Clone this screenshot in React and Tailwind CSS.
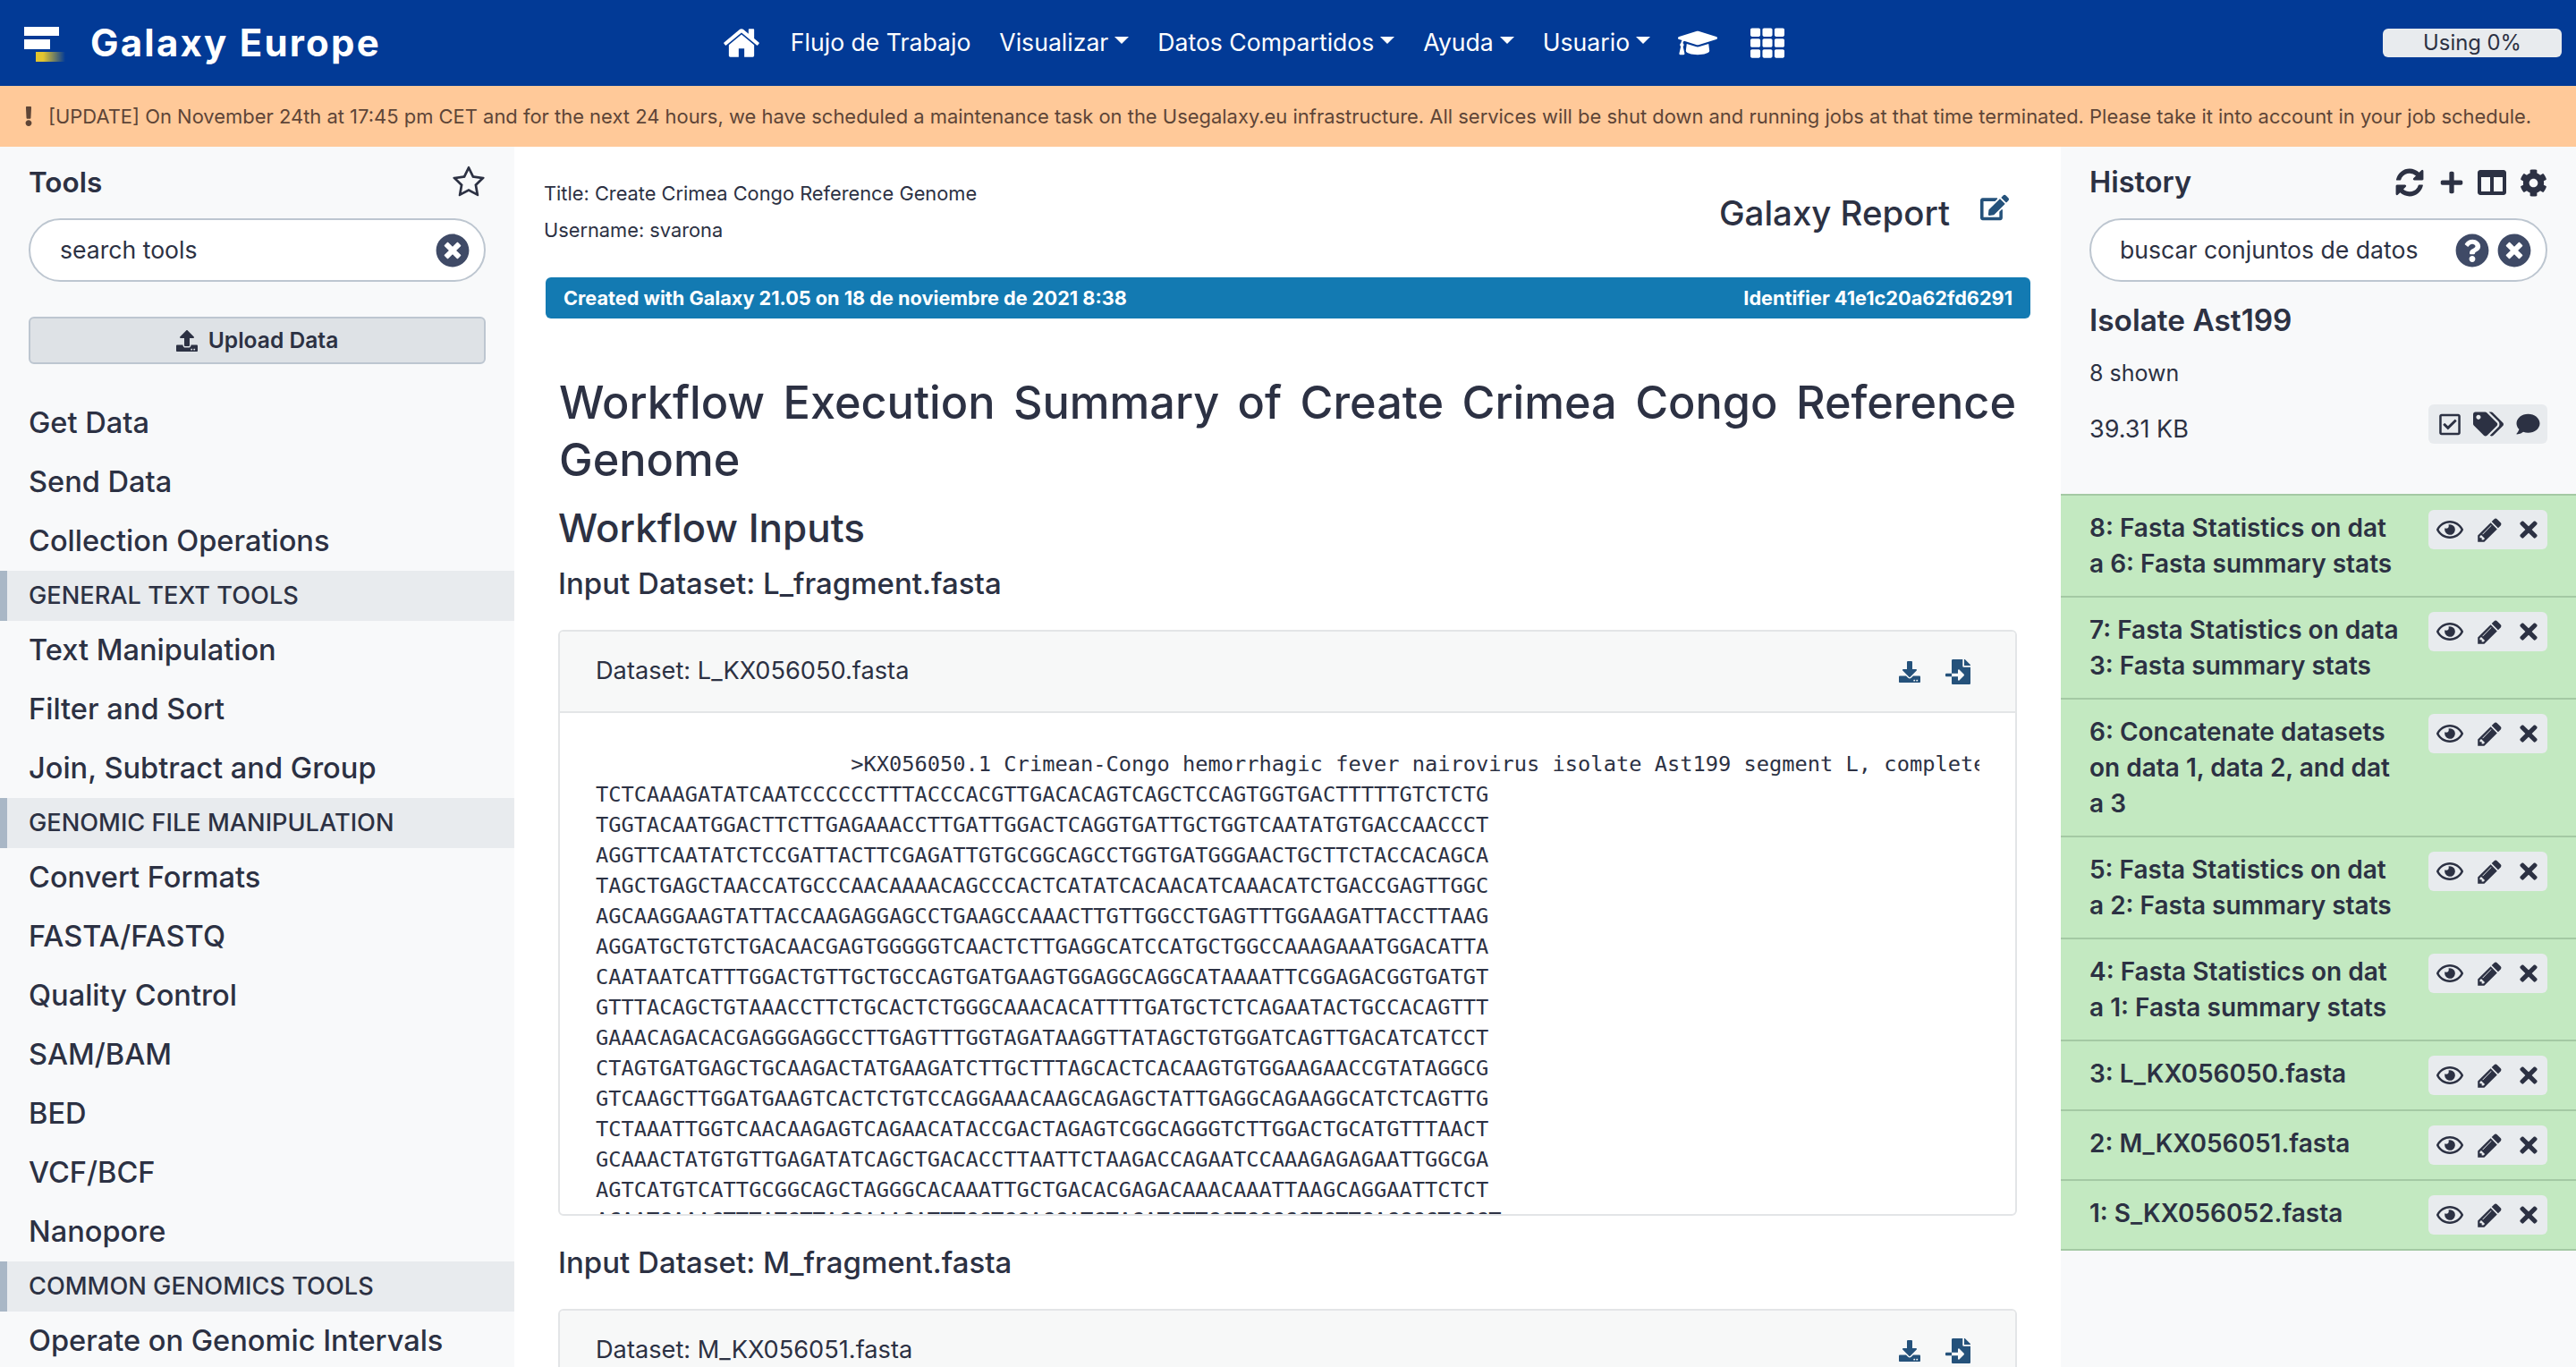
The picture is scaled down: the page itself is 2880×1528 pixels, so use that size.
import * as React from "react";
import {
  FaTimesCircle,
  FaUpload,
  FaEdit,
  FaPlus,
  FaColumns,
  FaCog,
  FaQuestionCircle,
  FaRegCheckSquare,
  FaTags,
  FaComment,
  FaRegEye,
  FaTimes,
  FaDownload,
  FaFileImport,
  FaExclamation,
  FaGraduationCap,
  FaTh,
} from "react-icons/fa";

const Fa4 = ({ d, className }) => (
  <svg viewBox="0 0 1792 1792" fill="currentColor" className={className}>
    <path d={d} />
  </svg>
);

const HOME =
  "M1472 992v480q0 26-19 45t-45 19h-384v-384h-256v384h-384q-26 0-45-19t-19-45v-480q0-1 .5-3t.5-3l575-474 575 474q1 2 1 6zm223-69l-62 74q-8 9-21 11h-3q-13 0-21-7l-692-577-692 577q-12 8-24 7-13-2-21-11l-62-74q-8-10-7-23.5t11-21.5l719-599q32-26 76-26t76 26l244 204v-195q0-14 9-23t23-9h192q14 0 23 9t9 23v408l219 182q10 8 11 21.5t-7 23.5z";
const REFRESH =
  "M1639 1056q0 5-1 7-64 268-268 434.5t-478 166.5q-146 0-282.5-55t-243.5-157l-129 129q-19 19-45 19t-45-19-19-45v-448q0-26 19-45t45-19h448q26 0 45 19t19 45-19 45l-137 137q71 66 161 102t187 36q134 0 250-65t186-179q11-17 53-117 8-23 30-23h192q13 0 22.5 9.5t9.5 22.5zm25-800v448q0 26-19 45t-45 19h-448q-26 0-45-19t-19-45 19-45l138-138q-148-137-349-137-134 0-250 65t-186 179q-11 17-53 117-8 23-30 23h-199q-13 0-22.5-9.5t-9.5-22.5v-7q65-268 270-434.5t480-166.5q146 0 284 55.5t245 156.5l130-129q19-19 45-19t45 19 19 45z";
const PENCIL =
  "M491 1536l91-91-235-235-91 91v107h128v128h107zm523-928q0-22-22-22-10 0-17 7l-542 542q-7 7-7 17 0 22 22 22 10 0 17-7zm-54-192l416 416-832 832h-416v-416zm683 96q0 53-37 91l-166 166-416-416 166-165q36-38 91-38 53 0 91 38l235 234q37 39 37 91z";
const STAR =
  "M1201 1004l306-297-422-62-189-382-189 382-422 62 306 297-73 421 378-199 377 199zm527-357q0 22-26 48l-363 354 86 500q1 7 1 20 0 50-41 50-19 0-40-12l-449-236-449 236q-22 12-40 12-21 0-31.5-14.5t-10.5-35.5q0-6 2-20l86-500-364-354q-25-27-25-48 0-37 56-46l502-73 225-455q19-41 49-41t49 41l225 455 502 73q56 9 56 46z";

const SEQ = [
  "TCTCAAAGATATCAATCCCCCCTTTACCCACGTTGACACAGTCAGCTCCAGTGGTGACTTTTTGTCTCTG",
  "TGGTACAATGGACTTCTTGAGAAACCTTGATTGGACTCAGGTGATTGCTGGTCAATATGTGACCAACCCT",
  "AGGTTCAATATCTCCGATTACTTCGAGATTGTGCGGCAGCCTGGTGATGGGAACTGCTTCTACCACAGCA",
  "TAGCTGAGCTAACCATGCCCAACAAAACAGCCCACTCATATCACAACATCAAACATCTGACCGAGTTGGC",
  "AGCAAGGAAGTATTACCAAGAGGAGCCTGAAGCCAAACTTGTTGGCCTGAGTTTGGAAGATTACCTTAAG",
  "AGGATGCTGTCTGACAACGAGTGGGGGTCAACTCTTGAGGCATCCATGCTGGCCAAAGAAATGGACATTA",
  "CAATAATCATTTGGACTGTTGCTGCCAGTGATGAAGTGGAGGCAGGCATAAAATTCGGAGACGGTGATGT",
  "GTTTACAGCTGTAAACCTTCTGCACTCTGGGCAAACACATTTTGATGCTCTCAGAATACTGCCACAGTTT",
  "GAAACAGACACGAGGGAGGCCTTGAGTTTGGTAGATAAGGTTATAGCTGTGGATCAGTTGACATCATCCT",
  "CTAGTGATGAGCTGCAAGACTATGAAGATCTTGCTTTAGCACTCACAAGTGTGGAAGAACCGTATAGGCG",
  "GTCAAGCTTGGATGAAGTCACTCTGTCCAGGAAACAAGCAGAGCTATTGAGGCAGAAGGCATCTCAGTTG",
  "TCTAAATTGGTCAACAAGAGTCAGAACATACCGACTAGAGTCGGCAGGGTCTTGGACTGCATGTTTAACT",
  "GCAAACTATGTGTTGAGATATCAGCTGACACCTTAATTCTAAGACCAGAATCCAAAGAGAGAATTGGCGA",
  "AGTCATGTCATTGCGGCAGCTAGGGCACAAATTGCTGACACGAGACAAACAAATTAAGCAGGAATTCTCT",
  "ACAATGAAACTTTATGTTACGAAAGATTTGCTGGAGGATGTAGATGTTGCTGGGCCTGTTGAGGGCTGGGT",
];

const HISTORY = [
  ["8: Fasta Statistics on dat", "a 6: Fasta summary stats"],
  ["7: Fasta Statistics on data", "3: Fasta summary stats"],
  ["6: Concatenate datasets", "on data 1, data 2, and dat", "a 3"],
  ["5: Fasta Statistics on dat", "a 2: Fasta summary stats"],
  ["4: Fasta Statistics on dat", "a 1: Fasta summary stats"],
  ["3: L_KX056050.fasta"],
  ["2: M_KX056051.fasta"],
  ["1: S_KX056052.fasta"],
];

function NavItem({ label, caret, className }) {
  return (
    <div className={"flex items-center whitespace-nowrap " + className}>
      <span>{label}</span>
      {caret && (
        <span className="ml-[7px] mb-[6px] h-0 w-0 border-x-[8px] border-t-[8px] border-x-transparent border-t-white" />
      )}
    </div>
  );
}

function Section({ children }) {
  return (
    <div className="flex h-[56px] items-center border-l-[8px] border-[#a9b7c6] bg-[#e8ebee] pl-[24px] text-[27.2px] font-medium uppercase">
      {children}
    </div>
  );
}

function Tool({ children }) {
  return <div className="flex h-[66px] items-center pb-[1px] pl-[32px] text-[32.6px] font-[450]">{children}</div>;
}

function Dataset({ name, children }) {
  return (
    <div className="mx-[49px] overflow-hidden rounded-[6px] border-2 border-[#e3e5e7]">
      <div className="flex h-[91px] items-center justify-between border-b-2 border-[#e3e5e7] bg-[#f7f8f8] pl-[40px] pr-[50px] text-[27.2px]">
        <span>Dataset: {name}</span>
        <div className="flex items-center gap-[28px] text-[#25527b]">
          <FaDownload className="h-[24px] w-[24px]" />
          <FaFileImport className="h-[28px] w-[28px]" />
        </div>
      </div>
      {children}
    </div>
  );
}

export default function App() {
  return (
    <div className="flex h-[1528px] flex-col overflow-hidden bg-white font-[Inter,sans-serif] text-[#2c3143]">
      <div className="flex h-[96px] shrink-0 items-center bg-[#023a96] text-white">
        <svg viewBox="0 0 48 42" className="ml-[27px] h-[42px] w-[48px] shrink-0">
          <defs>
            <linearGradient id="logoFade">
              <stop offset="0.25" stopColor="#e2c52f" />
              <stop offset="1" stopColor="#e2c52f" stopOpacity="0" />
            </linearGradient>
          </defs>
          <rect x="0" y="3" width="39" height="10" fill="#fff" />
          <rect x="0" y="17" width="29" height="11" fill="#fff" />
          <rect x="13" y="31" width="33" height="11" fill="url(#logoFade)" />
        </svg>
        <div className="mb-[2px] ml-[26px] whitespace-nowrap text-[42px] font-bold tracking-[2.2px]">Galaxy Europe</div>
        <Fa4 d={HOME} className="ml-[381px] h-[44px] w-[44px] shrink-0" />
        <div className="ml-[33px] flex items-center text-[26.6px]">
          <NavItem label="Flujo de Trabajo" />
          <NavItem label="Visualizar" caret className="ml-[32px]" />
          <NavItem label="Datos Compartidos" caret className="ml-[32px]" />
          <NavItem label="Ayuda" caret className="ml-[32px]" />
          <NavItem label="Usuario" caret className="ml-[32px]" />
        </div>
        <FaGraduationCap className="ml-[31px] h-[44px] w-[44px] shrink-0" />
        <FaTh className="ml-[37px] h-[38px] w-[38px] shrink-0" />
        <div className="ml-auto mr-[16px] flex h-[32px] w-[200px] items-center justify-center rounded-[6px] bg-[#e8ebee] text-[23.8px] text-[#2c3143]">
          Using 0%
        </div>
      </div>

      <div className="flex h-[68px] shrink-0 items-center whitespace-nowrap bg-[#ffc999] pl-[26px] text-[21.95px] text-[#5e4537]">
        <FaExclamation className="mr-[16px] h-[22px] w-[12px] shrink-0" />
        <span>
          [UPDATE] On November 24th at 17:45 pm CET and for the next 24 hours, we have scheduled a maintenance task on the
          Usegalaxy.eu infrastructure. All services will be shut down and running jobs at that time terminated. Please take
          it into account in your job schedule.
        </span>
      </div>

      <div className="flex min-h-0 flex-1">
        <div className="w-[575px] shrink-0 overflow-hidden bg-[#f8f9fa]">
          <div className="flex h-[80px] items-center justify-between px-[32px]">
            <span className="text-[31.5px] font-semibold">Tools</span>
            <Fa4 d={STAR} className="h-[38px] w-[38px]" />
          </div>
          <div className="mx-[32px] flex h-[71px] items-center justify-between rounded-full border-2 border-[#bdc6d0] bg-white pl-[33px] pr-[16px]">
            <span className="text-[26.6px]">search tools</span>
            <FaTimesCircle className="h-[38px] w-[38px] text-[#3f4a66]" />
          </div>
          <div className="mx-[32px] mt-[39px] flex h-[53px] items-center justify-center gap-[12px] rounded-[6px] border-2 border-[#bdc6d0] bg-[#dee2e6] text-[24.6px] font-semibold">
            <FaUpload className="h-[24px] w-[24px]" />
            Upload Data
          </div>
          <div className="mt-[33px]">
            <Tool>Get Data</Tool>
            <Tool>Send Data</Tool>
            <Tool>Collection Operations</Tool>
            <Section>General Text Tools</Section>
            <Tool>Text Manipulation</Tool>
            <Tool>Filter and Sort</Tool>
            <Tool>Join, Subtract and Group</Tool>
            <Section>Genomic File Manipulation</Section>
            <Tool>Convert Formats</Tool>
            <Tool>FASTA/FASTQ</Tool>
            <Tool>Quality Control</Tool>
            <Tool>SAM/BAM</Tool>
            <Tool>BED</Tool>
            <Tool>VCF/BCF</Tool>
            <Tool>Nanopore</Tool>
            <Section>Common Genomics Tools</Section>
            <Tool>Operate on Genomic Intervals</Tool>
          </div>
        </div>

        <div className="min-w-0 flex-1 overflow-hidden">
          <div className="flex h-[146px] justify-between pl-[33px] pr-[58px]">
            <div className="pt-[32px] text-[21.8px] leading-[41px]">
              <div>Title: Create Crimea Congo Reference Genome</div>
              <div>Username: svarona</div>
            </div>
            <div className="flex items-start pt-[46px]">
              <span className="text-[38.4px] font-medium leading-[56px]">Galaxy Report</span>
              <FaEdit className="ml-[34px] mt-[6px] h-[32px] w-[32px] text-[#25527b]" />
            </div>
          </div>
          <div className="ml-[35px] mr-[34px] flex h-[46px] items-center justify-between rounded-[6px] bg-[#137ab2] px-[20px] text-[21.7px] font-bold text-white">
            <span>Created with Galaxy 21.05 on 18 de noviembre de 2021 8:38</span>
            <span>Identifier 41e1c20a62fd6291</span>
          </div>
          <h1 className="mx-[50px] mt-[62px] text-justify text-[50.4px] font-medium leading-[64px]">
            Workflow Execution Summary of Create Crimea Congo Reference Genome
          </h1>
          <h2 className="mx-[49px] mt-[15px] text-[44px] font-medium leading-[58px]">Workflow Inputs</h2>
          <h3 className="mx-[49px] mt-[9px] text-[33px] font-medium leading-[48px]">Input Dataset: L_fragment.fasta</h3>
          <div className="mt-[28px]">
            <Dataset name="L_KX056050.fasta">
              <div className="h-[560px] overflow-hidden px-[40px] pt-[40px] font-['DejaVu_Sans_Mono',monospace] text-[23.7px] leading-[34px]">
                <div className="w-full overflow-hidden whitespace-pre">
                  {"                    >KX056050.1 Crimean-Congo hemorrhagic fever nairovirus isolate Ast199 segment L, complete sequence"}
                </div>
                {SEQ.map((line) => (
                  <div key={line} className="whitespace-pre">
                    {line}
                  </div>
                ))}
              </div>
            </Dataset>
          </div>
          <h3 className="mx-[49px] mt-[28px] text-[33px] font-medium leading-[48px]">Input Dataset: M_fragment.fasta</h3>
          <div className="mt-[28px]">
            <Dataset name="M_KX056051.fasta" />
          </div>
        </div>

        <div className="w-[576px] shrink-0 overflow-hidden bg-[#f8f9fa]">
          <div className="flex h-[80px] items-center justify-between px-[32px]">
            <span className="text-[32.5px] font-semibold">History</span>
            <div className="flex items-center gap-[15px]">
              <Fa4 d={REFRESH} className="h-[36px] w-[36px]" />
              <FaPlus className="h-[28px] w-[28px]" />
              <FaColumns className="h-[32px] w-[32px]" />
              <FaCog className="h-[31px] w-[31px]" />
            </div>
          </div>
          <div className="mx-[32px] flex h-[71px] items-center justify-between rounded-full border-2 border-[#bdc6d0] bg-white pl-[32px] pr-[16px]">
            <span className="text-[26.6px]">buscar conjuntos de datos</span>
            <div className="flex gap-[9px] text-[#3f4a66]">
              <FaQuestionCircle className="h-[38px] w-[38px]" />
              <FaTimesCircle className="h-[38px] w-[38px]" />
            </div>
          </div>
          <div className="ml-[32px] mt-[19px] text-[33.4px] font-semibold leading-[48px]">Isolate Ast199</div>
          <div className="ml-[32px] mt-[17px] text-[25px] leading-[36px]">8 shown</div>
          <div className="mx-[32px] mt-[17px] flex items-start justify-between">
            <span className="mt-[8px] text-[27px] leading-[40px]">39.31 KB</span>
            <div className="flex h-[44px] w-[133px] items-center gap-[14px] rounded-[6px] bg-[#e8ebee] pl-[12px]">
              <FaRegCheckSquare className="h-[27px] w-[24px]" />
              <FaTags className="h-[28px] w-[34px]" />
              <FaComment className="h-[26px] w-[27px]" />
            </div>
          </div>
          <div className="mt-[52px] border-b-2 border-[#a4c9a4]">
            {HISTORY.map((lines) => (
              <div
                key={lines[0]}
                className="flex items-start justify-between border-t-2 border-[#a4c9a4] bg-[#c3e9c1] px-[32px] py-[16px]"
              >
                <div className="whitespace-nowrap text-[28px] font-semibold leading-[40px]">
                  {lines.map((line) => (
                    <div key={line}>{line}</div>
                  ))}
                </div>
                <div className="flex h-[44px] w-[133px] items-center rounded-[6px] bg-[#e8ebee] pl-[9px]">
                  <FaRegEye className="h-[30px] w-[30px]" />
                  <Fa4 d={PENCIL} className="ml-[14px] h-[31px] w-[31px]" />
                  <FaTimes className="ml-[18px] h-[28px] w-[20px]" />
                </div>
              </div>
            ))}
          </div>
        </div>
      </div>
    </div>
  );
}
